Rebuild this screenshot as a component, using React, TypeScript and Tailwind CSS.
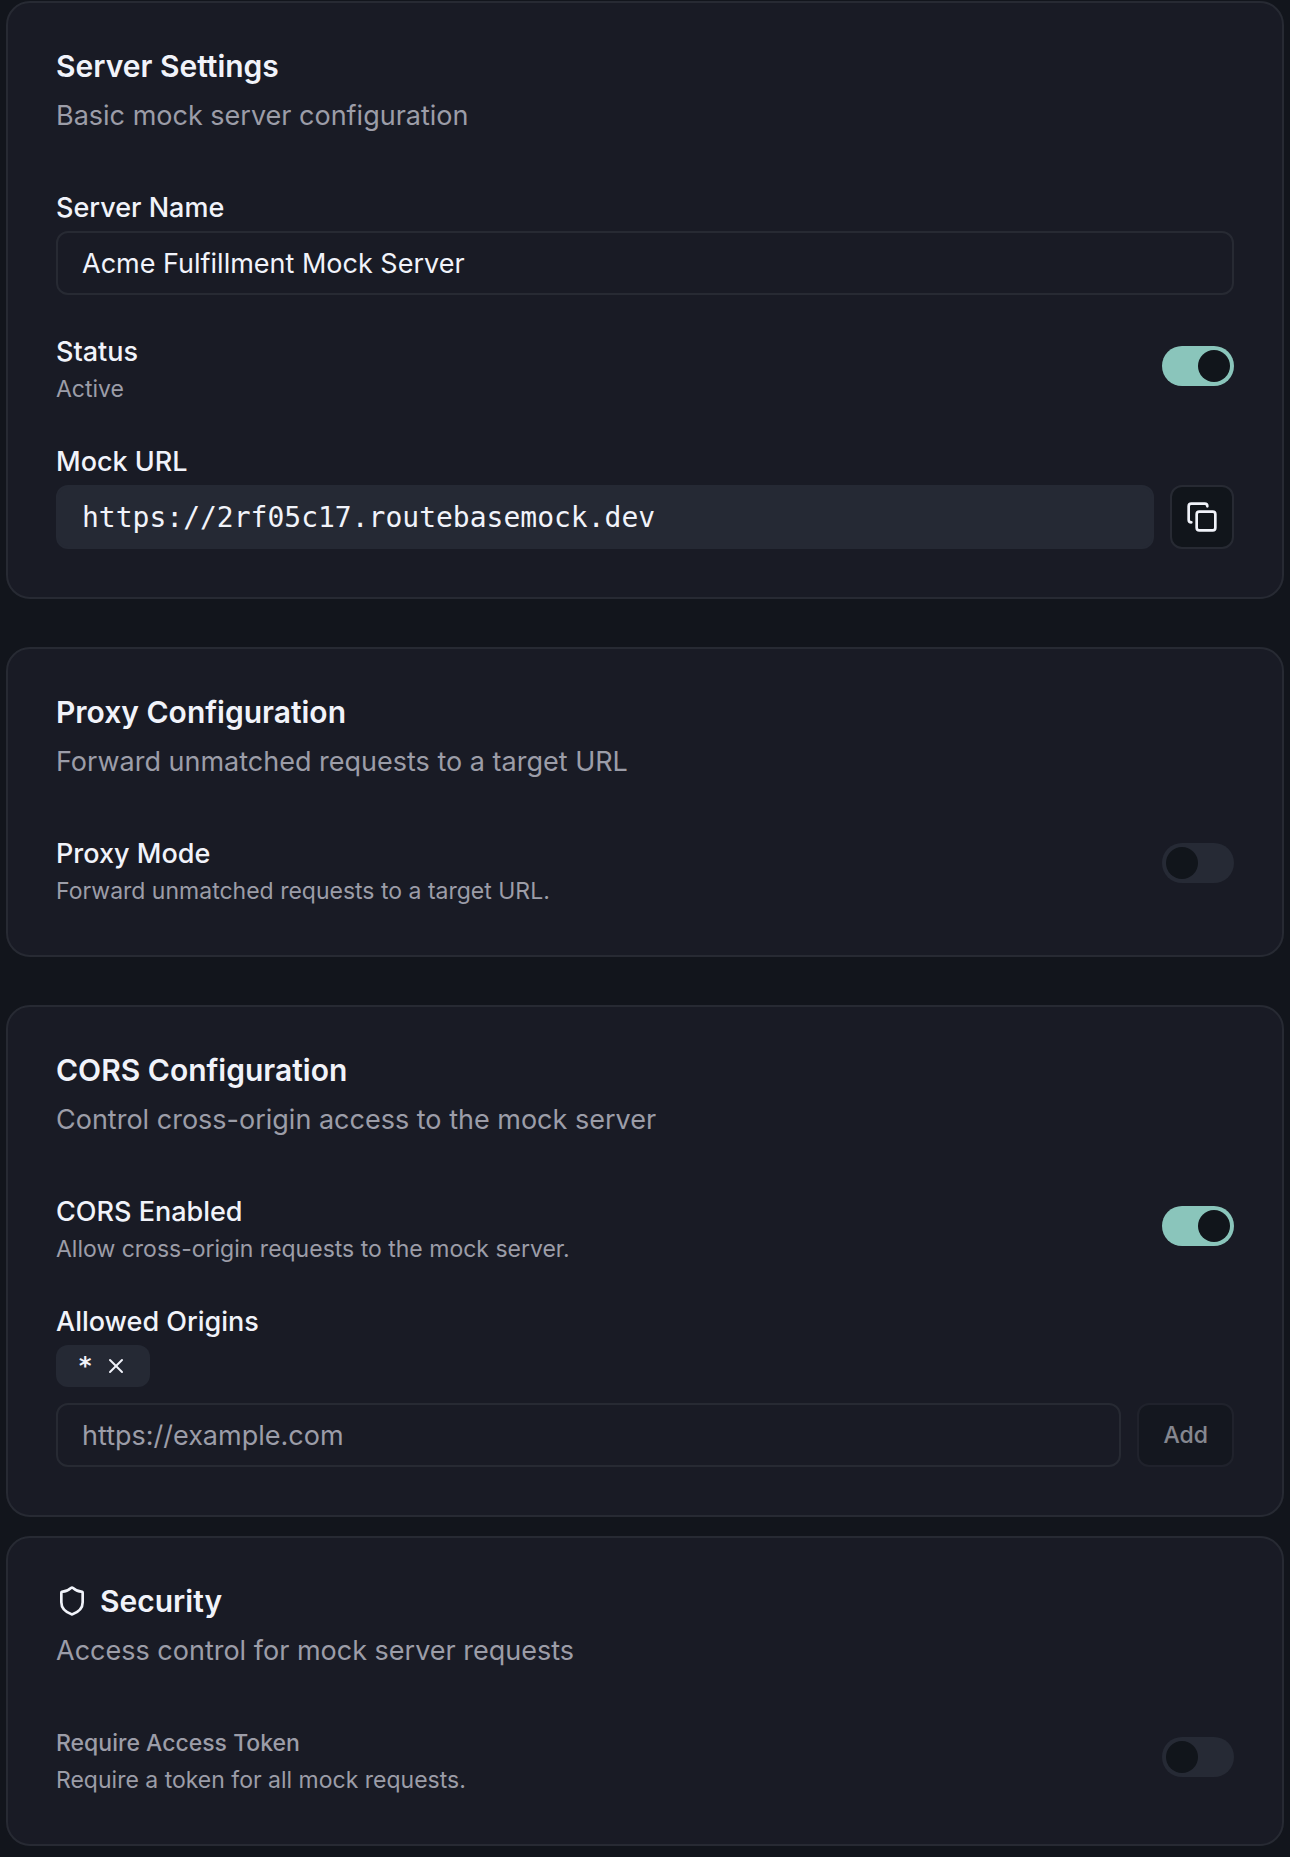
import React, { useState } from "react";
import { Copy, Shield, X } from "lucide-react";

type CardProps = {
  title: string;
  description: string;
  icon?: React.ReactNode;
  children: React.ReactNode;
};

const Card = ({ title, description, icon, children }: CardProps) => {
  return (
    <section className="rounded-3xl border-2 border-[#272a33] bg-[#191b25] p-12">
      <h2 className="flex items-center gap-3 text-[30px] leading-[30px] font-semibold">
        {icon}
        {title}
      </h2>
      <p className="mt-4 text-[27px] leading-[38px] text-[#9c9da8]">
        {description}
      </p>
      <div className="mt-12 flex flex-col gap-8">{children}</div>
    </section>
  );
};

type SwitchRowProps = {
  id: string;
  label: string;
  hint: string;
  checked: boolean;
  onChange: (checked: boolean) => void;
  small?: boolean;
  alignTop?: boolean;
};

const SwitchRow = ({
  id,
  label,
  hint,
  checked,
  onChange,
  small,
  alignTop,
}: SwitchRowProps) => {
  return (
    <div
      className={
        alignTop
          ? "flex items-start justify-between gap-8"
          : "flex items-center justify-between gap-8"
      }
    >
      <div className="pb-1">
        <label
          htmlFor={id}
          className={
            small
              ? "block text-[23px] leading-[50px] font-medium text-[#9c9da8]"
              : "block text-[27px] leading-[50px] font-medium"
          }
        >
          {label}
        </label>
        <p className="text-[23px] leading-6 text-[#9c9da8]">{hint}</p>
      </div>
      <div className={alignTop ? "flex pt-3.5" : "flex"}>
        <input
          id={id}
          type="checkbox"
          role="switch"
          checked={checked}
          onChange={(e) => onChange(e.target.checked)}
          className="flex h-10 w-18 shrink-0 cursor-pointer appearance-none items-center rounded-full bg-[#262a35] px-1 before:size-8 before:rounded-full before:bg-[#11151b] before:content-[''] checked:justify-end checked:bg-[#8ac5bb]"
        />
      </div>
    </div>
  );
};

const App = () => {
  const [name, setName] = useState("Acme Fulfillment Mock Server");
  const [active, setActive] = useState(true);
  const [proxy, setProxy] = useState(false);
  const [cors, setCors] = useState(true);
  const [token, setToken] = useState(false);
  const [origins, setOrigins] = useState(["*"]);
  const [origin, setOrigin] = useState("");
  const url = "https://2rf05c17.routebasemock.dev";

  const addOrigin = () => {
    setOrigins([...origins, origin]);
    setOrigin("");
  };

  return (
    <main className="min-h-screen bg-[#12151c] px-1.5 pt-px pb-2 font-['Inter','Liberation_Sans',sans-serif] text-[#f1f3fa]">
      <div className="flex flex-col gap-12">
        <Card
          title="Server Settings"
          description="Basic mock server configuration"
        >
          <div>
            <label
              htmlFor="name"
              className="block pt-0.5 text-[27px] leading-[46px] font-medium"
            >
              Server Name
            </label>
            <input
              id="name"
              value={name}
              onChange={(e) => setName(e.target.value)}
              className="block h-16 w-full rounded-xl border-2 border-[#272a33] px-6 text-[27px] outline-none"
            />
          </div>
          <SwitchRow
            id="status"
            label="Status"
            hint={active ? "Active" : "Inactive"}
            checked={active}
            onChange={setActive}
          />
          <div>
            <label
              htmlFor="url"
              className="block pt-0.5 text-[27px] leading-[46px] font-medium"
            >
              Mock URL
            </label>
            <div className="flex gap-4">
              <input
                id="url"
                readOnly
                value={url}
                className="h-16 min-w-0 flex-1 rounded-xl border-2 border-[#252934] bg-[#252934] px-6 font-['DejaVu_Sans_Mono','Liberation_Mono',monospace] text-[28px] outline-none"
              />
              <button
                aria-label="Copy URL"
                onClick={() => navigator.clipboard.writeText(url)}
                className="flex size-16 shrink-0 cursor-pointer items-center justify-center rounded-xl border-2 border-[#272a33] bg-[#11151b]"
              >
                <Copy size={32} />
              </button>
            </div>
          </div>
        </Card>

        <Card
          title="Proxy Configuration"
          description="Forward unmatched requests to a target URL"
        >
          <SwitchRow
            id="proxy"
            label="Proxy Mode"
            hint="Forward unmatched requests to a target URL."
            checked={proxy}
            onChange={setProxy}
            alignTop
          />
        </Card>

        <Card
          title="CORS Configuration"
          description="Control cross-origin access to the mock server"
        >
          <SwitchRow
            id="cors"
            label="CORS Enabled"
            hint="Allow cross-origin requests to the mock server."
            checked={cors}
            onChange={setCors}
          />
          <div>
            <label
              htmlFor="origin"
              className="block pt-0.5 text-[27px] leading-[46px] font-medium"
            >
              Allowed Origins
            </label>
            <div className="flex flex-wrap gap-2">
              {origins.map((o) => (
                <span
                  key={o}
                  className="flex h-[42px] items-center gap-3 rounded-xl bg-[#252934] px-[22px] font-['DejaVu_Sans_Mono','Liberation_Mono',monospace] text-2xl leading-7 font-bold"
                >
                  {o}
                  <button
                    aria-label={`Remove ${o}`}
                    onClick={() => setOrigins(origins.filter((x) => x !== o))}
                    className="cursor-pointer"
                  >
                    <X size={24} />
                  </button>
                </span>
              ))}
            </div>
            <div className="mt-4 flex gap-4">
              <input
                id="origin"
                value={origin}
                onChange={(e) => setOrigin(e.target.value)}
                placeholder="https://example.com"
                className="h-16 min-w-0 flex-1 rounded-xl border-2 border-[#272a33] px-6 text-[27px] outline-none placeholder:text-[#9c9da8]"
              />
              <button
                disabled={!origin}
                onClick={addOrigin}
                className="h-16 shrink-0 rounded-xl border-2 border-[#272a33] bg-[#11151b] px-6 text-[23px] font-medium disabled:opacity-50"
              >
                Add
              </button>
            </div>
          </div>
        </Card>
      </div>

      <div className="mt-[19px]">
        <Card
          title="Security"
          description="Access control for mock server requests"
          icon={<Shield size={32} className="-my-px" />}
        >
          <SwitchRow
            id="token"
            label="Require Access Token"
            hint="Require a token for all mock requests."
            checked={token}
            onChange={setToken}
            small
          />
        </Card>
      </div>
    </main>
  );
};

export default App;
